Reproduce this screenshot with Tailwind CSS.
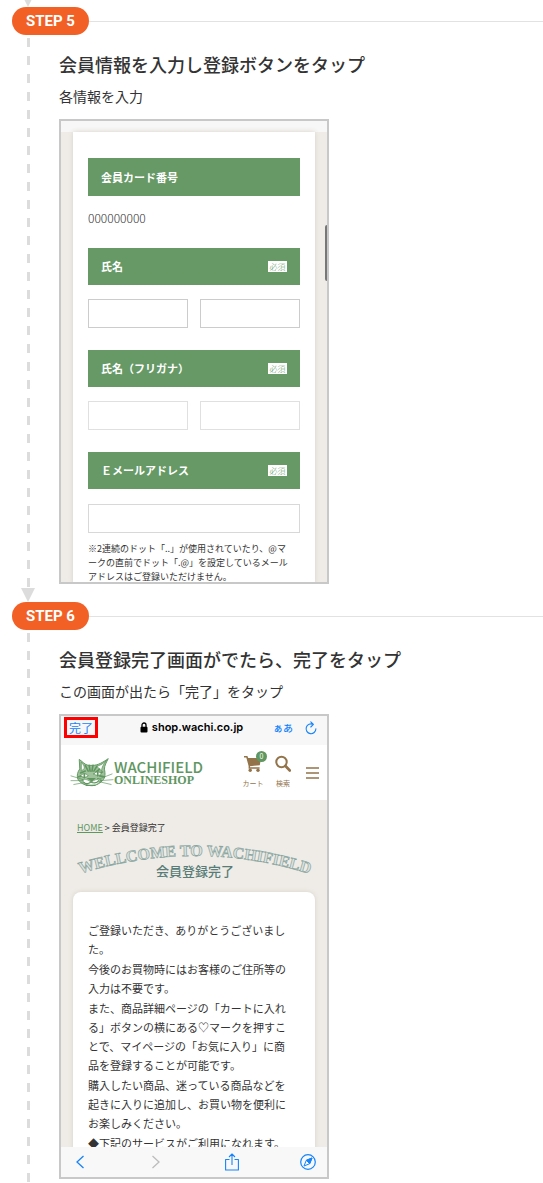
<!DOCTYPE html>
<html lang="ja">
<head>
<meta charset="utf-8">
<meta name="viewport" content="width=device-width, initial-scale=1">
<title>会員登録の手順</title>
<script src="https://cdn.jsdelivr.net/npm/@tailwindcss/browser@4"></script>
</head>
<body class="bg-white font-['Noto_Sans_CJK_JP',sans-serif] text-[#333]">
<main class="overflow-hidden pl-3">
  <div class="flex h-[7px] w-8 items-end justify-center overflow-hidden">
    <svg class="h-[14px] w-[14px] shrink-0" viewBox="0 0 14 14" aria-hidden="true"><path d="M0 0h14L7 14z" fill="#dcdcdc"/></svg>
  </div>

  <section>
    <div class="flex items-center">
      <span class="flex h-7 w-[77px] items-center justify-center rounded-full bg-[#f26026] font-['Roboto',sans-serif] text-[15px] font-bold text-white">STEP 5</span>
      <span class="h-px flex-1 bg-[#e2e2e2]"></span>
    </div>
    <div class="flex">
      <div class="flex w-8 shrink-0 flex-col items-center">
        <div class="mt-[3px] w-[3px] flex-1 bg-[repeating-linear-gradient(to_bottom,#dcdcdc_0,#dcdcdc_9px,transparent_9px,transparent_18px)]"></div>
        <svg class="h-[14px] w-[14px]" viewBox="0 0 14 14" aria-hidden="true"><path d="M0 0h14L7 14z" fill="#dcdcdc"/></svg>
      </div>
      <div class="min-w-0 flex-1 pt-[17px] pb-[18px] pl-[15px]">
        <h2 class="text-lg leading-6 font-medium">会員情報を入力し登録ボタンをタップ</h2>
        <p class="mt-[10px] text-sm leading-5">各情報を入力</p>
        <div class="relative mt-[13px] flex h-[465px] w-full max-w-[270px] flex-col overflow-hidden border-2 border-[#c8c8c8] bg-[#efece7]">
          <div class="h-[11px] shrink-0 bg-[#f7f7f7]"></div>
          <form class="mx-3 flex-1 shrink-0 bg-white px-[15px] pt-[26px] shadow-[0_0_5px_#d8d0c8]">
            <div class="flex h-[38px] items-center bg-[#669965] px-[13px] text-[11px] font-bold text-white">会員カード番号</div>
            <p class="mt-3 mb-5 text-xs leading-5 font-light">000000000</p>
            <fieldset>
              <div class="flex h-[37px] items-center justify-between bg-[#669965] px-[13px] text-[11px] font-bold text-white"><span>氏名</span><span class="flex h-[11px] w-[19px] items-center justify-center bg-white text-[8px] font-light text-[#669965]">必須</span></div>
              <div class="mt-[14px] mb-[22px] grid grid-cols-2 gap-3">
                <input aria-label="姓" class="h-[29px] w-full min-w-0 border border-[#ccc] px-2 text-xs">
                <input aria-label="名" class="h-[29px] w-full min-w-0 border border-[#ccc] px-2 text-xs">
              </div>
            </fieldset>
            <fieldset>
              <div class="flex h-[37px] items-center justify-between bg-[#669965] px-[13px] text-[11px] font-bold text-white"><span>氏名（フリガナ）</span><span class="flex h-[11px] w-[19px] items-center justify-center bg-white text-[8px] font-light text-[#669965]">必須</span></div>
              <div class="mt-[14px] mb-[22px] grid grid-cols-2 gap-3">
                <input aria-label="セイ" class="h-[29px] w-full min-w-0 border border-[#e0e0e0] px-2 text-xs">
                <input aria-label="メイ" class="h-[29px] w-full min-w-0 border border-[#e0e0e0] px-2 text-xs">
              </div>
            </fieldset>
            <label for="email" class="flex h-[37px] items-center justify-between bg-[#669965] px-[13px] text-[11px] font-bold text-white"><span>Ｅメールアドレス</span><span class="flex h-[11px] w-[19px] items-center justify-center bg-white text-[8px] font-light text-[#669965]">必須</span></label>
            <input id="email" type="email" class="mt-[15px] h-[29px] w-full border border-[#d8d8d8] px-2 text-xs">
            <p class="mt-[9px] text-[9px] leading-[14px] whitespace-nowrap">※2連続のドット「..」が使用されていたり、@マ<br>ークの直前でドット「.@」を設定しているメール<br>アドレスはご登録いただけません。</p>
          </form>
          <div class="absolute top-[104px] right-0 h-14 w-[2px] rounded-l-full bg-[#777]"></div>
        </div>
      </div>
    </div>
  </section>

  <section>
    <div class="flex items-center">
      <span class="flex h-7 w-[77px] items-center justify-center rounded-full bg-[#f26026] font-['Roboto',sans-serif] text-[15px] font-bold text-white">STEP 6</span>
      <span class="h-px flex-1 bg-[#e2e2e2]"></span>
    </div>
    <div class="flex">
      <div class="flex w-8 shrink-0 flex-col items-center">
        <div class="mt-[3px] w-[3px] flex-1 bg-[repeating-linear-gradient(to_bottom,#dcdcdc_0,#dcdcdc_9px,transparent_9px,transparent_18px)]"></div>
      </div>
      <div class="min-w-0 flex-1 pt-[17px] pb-1 pl-[15px]">
        <h2 class="text-lg leading-6 font-medium">会員登録完了画面がでたら、完了をタップ</h2>
        <p class="mt-[10px] text-sm leading-5">この画面が出たら「完了」をタップ</p>
        <div class="mt-[13px] flex h-[465px] w-full max-w-[270px] flex-col overflow-hidden border-2 border-[#c8c8c8] bg-[#efece7]">
          <div class="flex h-[29px] shrink-0 items-start bg-[#f7f7f7] pt-px pr-[10px] pl-[3px]">
            <button class="flex h-[21px] w-[34px] items-center justify-center border-[3px] border-[#fe0000] text-xs leading-none text-[#1683fb]">完了</button>
            <div class="flex h-[21px] flex-1 items-center justify-center gap-1 pl-3 text-black">
              <svg class="h-[11px] w-2" viewBox="0 0 8 11" aria-hidden="true"><path d="M2 5V3a2 2 0 0 1 4 0v2" fill="none" stroke="#000" stroke-width="1.3"/><rect x=".5" y="4.7" width="7" height="5.8" rx="1"/></svg>
              <span class="font-['Inter',sans-serif] text-[11px] font-semibold">shop.wachi.co.jp</span>
            </div>
            <div class="flex h-[21px] items-center gap-3 text-[#1683fb]">
              <button class="text-[10px] leading-none font-medium">ぁあ</button>
              <button aria-label="再読み込み"><svg class="h-[14px] w-3" viewBox="0 0 12 14" fill="none" stroke="currentColor" stroke-width="1.1" stroke-linecap="round" stroke-linejoin="round" aria-hidden="true"><path d="M10.9 7.8A4.9 4.9 0 1 1 8.2 3.4M5.8.8 8.4 3.4 5.8 6"/></svg></button>
            </div>
          </div>
          <header class="flex h-[55px] shrink-0 items-center bg-white pr-2 pl-[9px]">
            <a href="#" class="flex items-center text-[#60965f]">
              <svg class="h-8 w-11 shrink-0" viewBox="0 0 46 32" fill="none" stroke="currentColor" stroke-linecap="round" aria-hidden="true">
                <path d="M10 2c3 2 5 5 9 6h5c5 0 10-3 16-7-2 4-4 7-4 11 1 5 1 9-2 12-4 4-9 6-14 5-5 0-10-3-12-7-1-4 0-7 2-10z" fill="#9fc29c" stroke-width="1"/>
                <path d="M12 5c2 2 3 4 3 6l-3 3zM38 3c-3 4-5 7-5 11l-5-5c4-1 7-3 10-6z" fill="#fff" stroke-width=".8"/>
                <path d="M16 8l3 6M20 8l1 6M24 8l-1 6M28 9l-3 5M31 12l-4 3M11 16l5-2M9 20l4-1M34 15l-4 1M36 20l-5-1M33 24l-4-2" stroke-width="1.7"/>
                <path d="M11 19c2-3 6-3 8 0-2 2-6 2-8 0zM25 17c2-3 6-3 8 0-2 2-6 2-8 0z" fill="#fff"/>
                <path d="M15 17v4M29 15v4M20 22h5l-2 2z" stroke-width="1.7"/>
                <path d="M13 23c2-1 7 0 9 3 3-3 7-4 10-3-1 4-5 6-10 6-4 0-8-2-9-6z" fill="#fff" stroke-width=".7"/>
                <path d="M15 26c2 2 6 1 7-1 2 2 6 2 8-1M17 29h9" stroke-width="1.2"/>
                <path d="M14 23L1 19M14 24H1M15 26L4 28M31 22l13-5M31 24l14-1M30 25l13 3" stroke-width=".7"/>
              </svg>
              <span class="flex flex-col">
                <span class="text-[15px] leading-[15px] font-medium">WACHIFIELD</span>
                <span class="font-['Liberation_Serif',serif] text-[12px] leading-3 font-bold">ONLINESHOP</span>
              </span>
            </a>
            <nav class="ml-auto flex items-center text-[#92734a]">
              <a href="#" class="relative flex w-[22px] flex-col items-center">
                <svg class="h-[17px] w-[18px]" viewBox="0 0 18 17" fill="currentColor" aria-hidden="true"><path d="M0 1h3.400l.8 2H17l-1.200 7.200-9.800 1v1.100h9.600v1.400H4.600V11L2.300 2.400H0z"/><circle cx="6.200" cy="15.200" r="1.700"/><circle cx="14" cy="15.200" r="1.700"/></svg>
                <span class="pt-1 text-[7px] leading-[14px]">カート</span>
                <span class="absolute -top-1 -right-[3px] flex size-[11px] items-center justify-center rounded-full bg-[#60965f] text-[7px] leading-none text-white">0</span>
              </a>
              <a href="#" class="ml-2 flex w-[22px] flex-col items-center">
                <svg class="h-[17px] w-4" viewBox="0 0 16 17" fill="none" stroke="currentColor" aria-hidden="true"><circle cx="6.500" cy="7" r="5.200" stroke-width="2"/><path d="m10.500 11 4.300 4.500" stroke-width="2.600" stroke-linecap="round"/></svg>
                <span class="pt-1 text-[7px] leading-[14px]">検索</span>
              </a>
              <button class="ml-3" aria-label="メニュー"><svg class="h-3 w-[13px]" viewBox="0 0 13 12" stroke="currentColor" stroke-width="1.500" aria-hidden="true"><path d="M0 1h13M0 6h13M0 11h13"/></svg></button>
            </nav>
          </header>
          <div class="flex min-h-0 flex-1 flex-col overflow-hidden pt-[22px]">
            <p class="shrink-0 pl-4 text-[9px] leading-3"><a href="#" class="text-[#60965f] underline">HOME</a> &gt; 会員登録完了</p>
            <div class="grid shrink-0 pt-2">
              <svg class="col-start-1 row-start-1 h-9 w-full" viewBox="0 0 266 36" role="img" aria-label="WELLCOME TO WACHIFIELD">
                <path id="arch" d="M15 33Q133-5 253 33" fill="none"/>
                <text class="font-['Liberation_Serif',serif] text-[16px] font-bold" fill="#dde3df" stroke="#8aa5a0" stroke-width=".7"><textPath href="#arch" startOffset="50%" text-anchor="middle">WELLCOME TO WACHIFIELD</textPath></text>
              </svg>
              <h3 class="col-start-1 row-start-1 pt-[19px] pl-[2px] text-center text-[13px] leading-5 font-medium text-[#587c77]">会員登録完了</h3>
            </div>
            <div class="mx-3 mt-[11px] flex-1 rounded-t-lg bg-white px-[15px] pt-[29px] shadow-[0_0_5px_#d8d0c8]">
              <div class="flex flex-col gap-px text-[11px] leading-[19px] whitespace-nowrap">
                <p>ご登録いただき、ありがとうございまし<br>た。</p>
                <p>今後のお買物時にはお客様のご住所等の<br>入力は不要です。</p>
                <p>また、商品詳細ページの「カートに入れ<br>る」ボタンの横にある♡マークを押すこ<br>とで、マイページの「お気に入り」に商<br>品を登録することが可能です。</p>
                <p>購入したい商品、迷っている商品などを<br>起きに入りに追加し、お買い物を便利に<br>お楽しみください。</p>
                <p>◆下記のサービスがご利用になれます。</p>
              </div>
            </div>
          </div>
          <nav class="flex h-[30px] shrink-0 items-center justify-between bg-[#f8f8f8] px-[11px] pb-px text-[#1683fb]">
            <button class="flex w-4 justify-center" aria-label="戻る"><svg class="h-[14px] w-2" viewBox="0 0 8 14" fill="none" stroke="currentColor" stroke-width="1.300" aria-hidden="true"><path d="M7.500 1 1 7l6.500 6"/></svg></button>
            <button class="flex w-4 justify-center text-[#bcbcbe]" aria-label="進む"><svg class="h-[14px] w-2" viewBox="0 0 8 14" fill="none" stroke="currentColor" stroke-width="1.300" aria-hidden="true"><path d="M.5 1 7 7 .5 13"/></svg></button>
            <button class="flex w-4 justify-center" aria-label="共有"><svg class="h-[18px] w-[14px]" viewBox="0 0 14 18" fill="none" stroke="currentColor" stroke-width="1.100" stroke-linejoin="round" aria-hidden="true"><path d="M4.500 6.500H.6v10.500h12.800V6.500H9.500M7 12V1M4 4l3-3 3 3"/></svg></button>
            <button class="flex w-4 justify-center" aria-label="Safari"><svg class="size-4" viewBox="0 0 16 16" fill="none" stroke="currentColor" aria-hidden="true"><circle cx="8" cy="8" r="7.300" stroke-width="1.200"/><path d="M12 4 9.700 9.700 4 12l2.300-5.700z"/><path d="M6.300 6.300 12 4 9.700 9.700z" fill="currentColor"/></svg></button>
          </nav>
        </div>
      </div>
    </div>
  </section>
</main>
</body>
</html>
